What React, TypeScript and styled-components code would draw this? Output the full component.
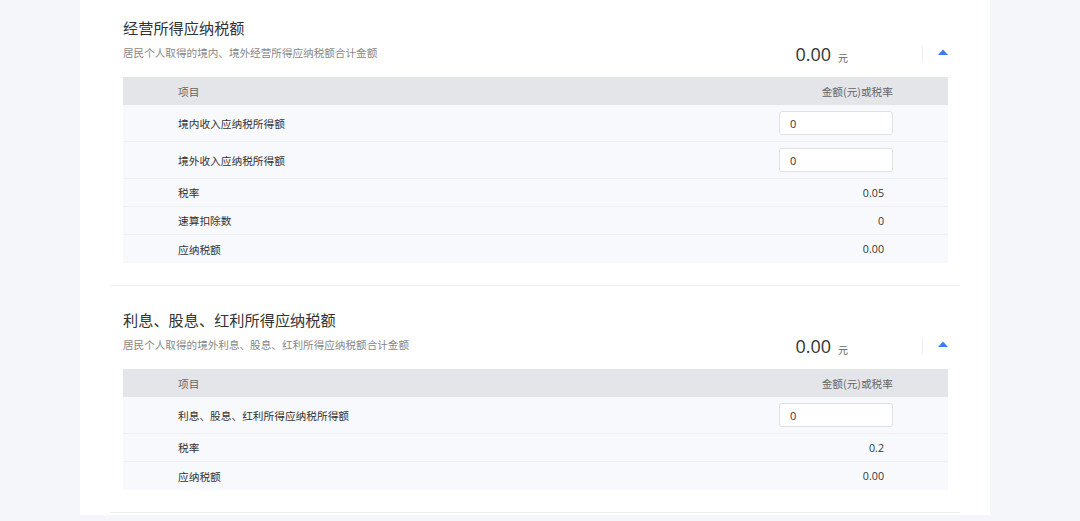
import * as React from 'react';
import styled, { createGlobalStyle } from 'styled-components';

const GlobalStyle = createGlobalStyle`
  html, body {
    margin: 0;
    padding: 0;
    background: #f5f6fa;
    font-family: "Noto Sans CJK SC", "Noto Sans", sans-serif;
    overflow: hidden;
  }
`;

const Page = styled.div`
  height: 521px;
  overflow: hidden;
`;
const Panel = styled.div`
  margin-left: 80px;
  width: 910px;
  min-height: 521px;
  background: #fff;
  padding: 0 30px;
  box-sizing: border-box;
`;
const Section = styled.section`
  padding: 21px 12px 22px 13px;
  border-bottom: 1px solid #eceef2;
  &:first-child {
    margin-top: -6px;
  }
`;
const Head = styled.div`
  display: flex;
  align-items: flex-end;
  justify-content: space-between;
  margin-bottom: 16px;
`;
const HeadText = styled.div`
  display: flex;
  flex-direction: column;
  gap: 6px;
`;
const Title = styled.h2`
  margin: 0;
  font-size: 15.2px;
  line-height: 24px;
  font-weight: 400;
  color: #333;
`;
const Subtitle = styled.p`
  margin: 0;
  font-size: 10.6px;
  line-height: 16px;
  color: #888;
`;
const Summary = styled.div`
  display: flex;
  align-items: center;
  margin-bottom: -5px;
`;
const Amount = styled.span`
  font-family: "Open Sans", "Noto Sans", sans-serif;
  font-size: 18px;
  color: #333;
  line-height: 24px;
`;
const Unit = styled.span`
  font-size: 10px;
  color: #666;
  margin-left: 7px;
  margin-top: 6px;
`;
const Divider = styled.span`
  width: 1px;
  height: 16px;
  background: #eef0f3;
  margin: 0 15px 0 74px;
`;
const Caret = styled.button`
  width: 10px;
  height: 6px;
  padding: 0;
  border: 0;
  background: none;
  display: flex;
  cursor: pointer;
  margin-top: -4px;
`;
const Table = styled.div`
  background: #f8f9fc;
`;
const Row = styled.div<{ $h: number; $header?: boolean }>`
  display: grid;
  grid-template-columns: 1fr 114px;
  align-items: center;
  box-sizing: border-box;
  height: ${(p) => p.$h}px;
  padding: 0 55px;
  font-size: 10.7px;
  color: ${(p) => (p.$header ? '#666' : '#333')};
  background: ${(p) => (p.$header ? '#e4e5e9' : 'transparent')};
  border-bottom: ${(p) => (p.$header ? '0' : '1px solid #eef0f4')};
  &:last-child {
    border-bottom: 0;
  }
`;
const Value = styled.span`
  text-align: right;
  padding-right: 9px;
  font-family: "Open Sans", "Noto Sans", sans-serif;
`;
const HeadValue = styled.span`
  text-align: right;
`;
const Input = styled.input`
  width: 114px;
  height: 24px;
  box-sizing: border-box;
  border: 1px solid #dfe1e6;
  border-radius: 3px;
  background: #fff;
  padding: 0 10px;
  font-family: "Open Sans", "Noto Sans", sans-serif;
  font-size: 11px;
  color: #333;
  outline: none;
`;

interface Item {
  label: string;
  value: string;
  input?: boolean;
}
interface Block {
  title: string;
  subtitle: string;
  items: Item[];
}

const blocks: Block[] = [
  {
    title: '经营所得应纳税额',
    subtitle: '居民个人取得的境内、境外经营所得应纳税额合计金额',
    items: [
      { label: '境内收入应纳税所得额', value: '0', input: true },
      { label: '境外收入应纳税所得额', value: '0', input: true },
      { label: '税率', value: '0.05' },
      { label: '速算扣除数', value: '0' },
      { label: '应纳税额', value: '0.00' },
    ],
  },
  {
    title: '利息、股息、红利所得应纳税额',
    subtitle: '居民个人取得的境外利息、股息、红利所得应纳税额合计金额',
    items: [
      { label: '利息、股息、红利所得应纳税所得额', value: '0', input: true },
      { label: '税率', value: '0.2' },
      { label: '应纳税额', value: '0.00' },
    ],
  },
];

const TaxSection: React.FC<{ block: Block }> = ({ block }) => (
  <Section>
    <Head>
      <HeadText>
        <Title>{block.title}</Title>
        <Subtitle>{block.subtitle}</Subtitle>
      </HeadText>
      <Summary>
        <Amount>0.00</Amount>
        <Unit>元</Unit>
        <Divider />
        <Caret aria-label="收起">
          <svg width="10" height="6" viewBox="0 0 10 6">
            <path d="M0 6 L5 0.5 L10 6 Z" fill="#3b7cf2" />
          </svg>
        </Caret>
      </Summary>
    </Head>
    <Table>
      <Row $h={28} $header>
        <span>项目</span>
        <HeadValue>金额(元)或税率</HeadValue>
      </Row>
      {block.items.map((item, i) => (
        <Row key={`row_${i}`} $h={item.input ? 37 : 28}>
          <span>{item.label}</span>
          {item.input ? <Input defaultValue={item.value} /> : <Value>{item.value}</Value>}
        </Row>
      ))}
    </Table>
  </Section>
);

const App: React.FC = () => (
  <Page>
    <GlobalStyle />
    <Panel>
      {blocks.map((b, i) => (
        <TaxSection key={`b_${i}`} block={b} />
      ))}
    </Panel>
  </Page>
);

export default App;
